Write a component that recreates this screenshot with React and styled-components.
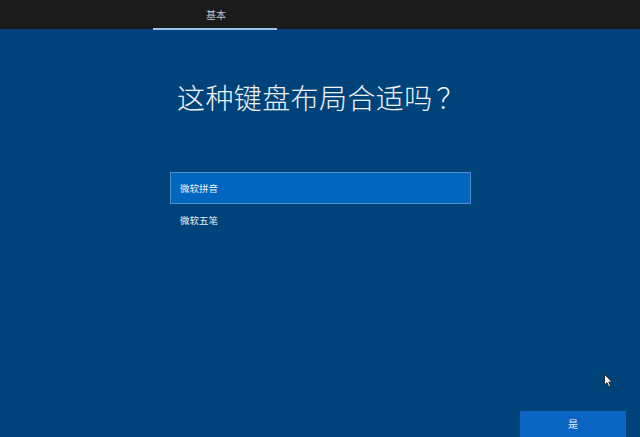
import React from 'react'
import styled, { createGlobalStyle } from 'styled-components'

const GlobalStyle = createGlobalStyle`
  html, body {
    margin: 0;
    padding: 0;
    background: #00437a;
  }
  body {
    font-family: "Noto Sans CJK SC", "Noto Sans", sans-serif;
  }
`

const Screen = styled.div`
  position: relative;
  width: 640px;
  height: 437px;
  overflow: hidden;
  display: flex;
  flex-direction: column;
  background: #00437a;
  color: #fff;
`

const TopBar = styled.div`
  height: 29px;
  background: #1b1b1b;
  display: flex;
  flex-direction: row;
  padding-left: 153px;
  box-sizing: border-box;
`

const Tab = styled.div`
  width: 124px;
  display: flex;
  align-items: center;
  justify-content: center;
  font-size: 10px;
  color: #c4c4c4;
  box-sizing: border-box;
  padding-left: 2px;
  border-bottom: 2px solid ${(p) => (p.active ? '#9cc4ea' : 'transparent')};
  margin-bottom: -1px;
`

const Main = styled.div`
  flex: 1;
  display: flex;
  flex-direction: column;
  align-items: center;
  padding-top: 51px;
`

const Title = styled.h1`
  margin: 0;
  font-size: 28px;
  line-height: 34px;
  font-weight: 300;
  color: #eef3f8;
  letter-spacing: 0.4px;
  padding-left: 2px;
`

const Question = styled.span`
  margin-left: 4px;
`

const LayoutList = styled.ul`
  list-style: none;
  margin: 58px 0 0 0;
  padding: 0;
  width: 301px;
  padding-left: 1px;
`

const LayoutItem = styled.li`
  height: 32px;
  box-sizing: border-box;
  display: flex;
  align-items: center;
  padding-left: 9px;
  font-size: 9.5px;
  color: #e6eef6;
  background: ${(p) => (p.selected ? '#0066be' : 'transparent')};
  border: 1px solid ${(p) => (p.selected ? '#4f8ccc' : 'transparent')};
`

const Footer = styled.div`
  display: flex;
  justify-content: flex-end;
  padding-right: 14px;
`

const PrimaryButton = styled.button`
  width: 106px;
  height: 26px;
  border: none;
  margin: 0;
  background: #0a66c2;
  color: #e8f0f8;
  font-family: inherit;
  font-size: 10px;
  display: flex;
  align-items: flex-start;
  justify-content: center;
  padding-top: 5px;
`

const Cursor = styled.svg`
  position: absolute;
  left: 604px;
  top: 374px;
`

const layouts = ['微软拼音', '微软五笔']

export default function App() {
  return (
    <>
      <GlobalStyle />
      <Screen>
        <TopBar>
          <Tab active>基本</Tab>
        </TopBar>
        <Main>
          <Title>
            这种键盘布局合适吗<Question>？</Question>
          </Title>
          <LayoutList>
            {layouts.map((name, index) => (
              <LayoutItem key={name} selected={index === 0}>
                {name}
              </LayoutItem>
            ))}
          </LayoutList>
        </Main>
        <Footer>
          <PrimaryButton>是</PrimaryButton>
        </Footer>
        <Cursor width='10' height='14' viewBox='0 0 10 14'>
          <path
            d='M0.5 0.5 L0.5 11 L3 8.6 L4.8 12.8 L6.5 12 L4.8 8 L8.2 8 Z'
            fill='#fff'
            stroke='#111'
            strokeWidth='0.8'
          />
        </Cursor>
      </Screen>
    </>
  )
}
